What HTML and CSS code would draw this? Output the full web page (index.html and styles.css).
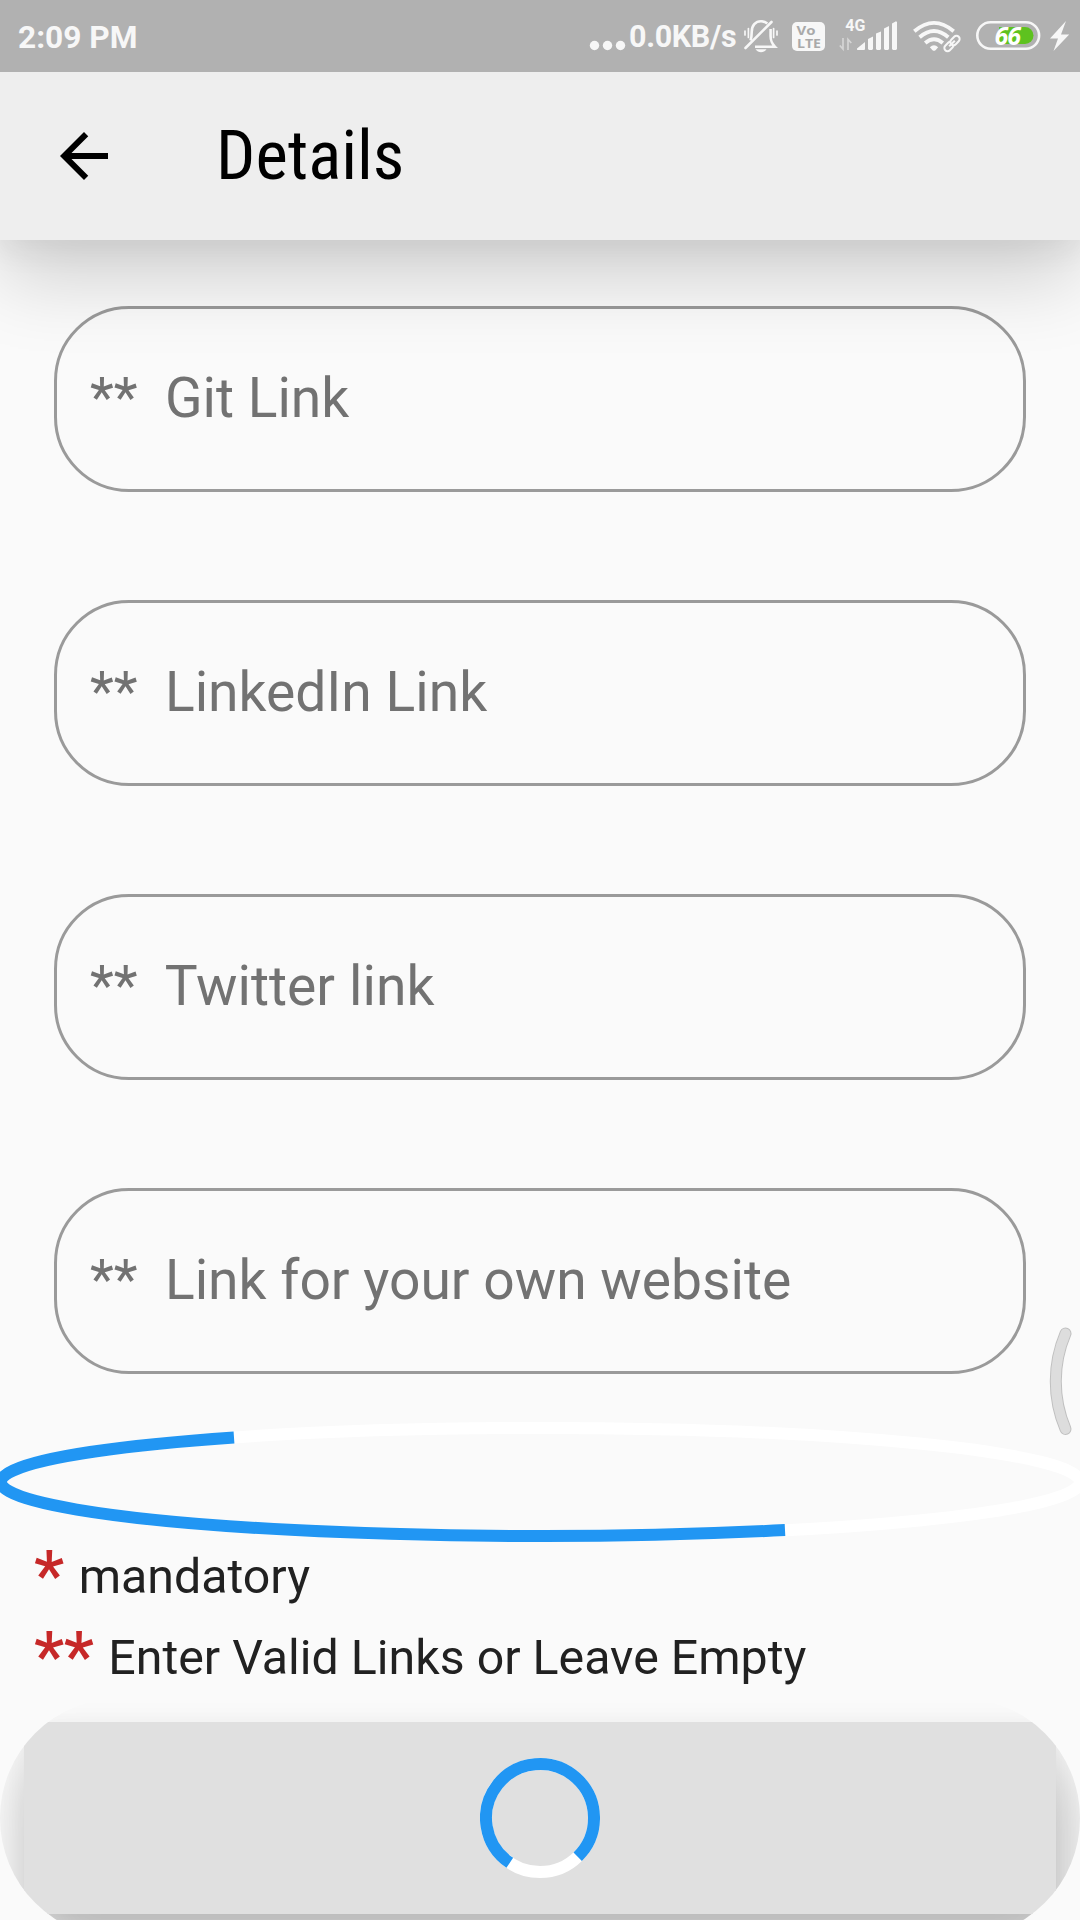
FILE: index.html
```html
<!DOCTYPE html>
<html lang="en">
<head>
<meta charset="utf-8">
<title>Details</title>
<link rel="stylesheet" href="styles.css">
</head>
<body>
<header class="top">
  <div class="status">
    <span class="time">2:09 PM</span>
    <div class="status-right">
      <svg class="dots" width="38" height="72" viewBox="588 0 38 72"><circle cx="594.5" cy="45.5" r="4.7"/><circle cx="607.5" cy="45.5" r="4.7"/><circle cx="620.5" cy="45.5" r="4.7"/></svg>
      <span class="speed">0.0KB/s</span>
      <svg width="40" height="72" viewBox="742 0 40 72">
        <g fill="none" stroke="#f7f7f7">
          <path stroke-width="2.6" d="M750.5 40.500C751.500 38 751.700 36 751.700 32C751.700 25.500 755.500 21.300 761 21.300C763.500 21.300 765.600 22 767.300 23.400M770.600 29V36C770.600 41 771.500 43 775 46.800H755"/>
          <path stroke-width="2.600" d="M771.500 22L745.500 48" stroke-linecap="round"/>
          <path stroke-width="1.700" stroke-linecap="round" d="M745 31V35M748.400 28.500V37.500M773.600 28.500V37.500M777 31V35"/>
        </g>
        <path fill="#f7f7f7" d="M755.500 49.200H766.500C765 51.300 763.200 52.200 761 52.200S757 51.300 755.500 49.200Z"/>
      </svg>
      <svg width="56" height="72" viewBox="782 0 56 72">
        <rect x="792" y="22" width="33" height="29" rx="5" fill="#f7f7f7"/>
        <g class="volte"><text x="796.500" y="35" textLength="19" lengthAdjust="spacingAndGlyphs">Vo</text><text x="797" y="47.500" textLength="24" lengthAdjust="spacingAndGlyphs">LTE</text></g>
      </svg>
      <svg width="64" height="72" viewBox="838 0 64 72">
        <text class="net" x="845.300" y="31.300">4G</text>
        <path fill="none" stroke="#d5d5d5" stroke-width="1.700" d="M843 38V49L839.800 45.500M848 50V39.500L851.300 43"/>
        <path fill="#f7f7f7" d="M857 48.500L865 42V49Q865 50 864 50H858Q856.500 50 857 48.500ZM868 39L873 36.500V49L872 50H869L868 49ZM876 33.500L881 31.500V49L880 50H877L876 49ZM884 28.500L889 26V49L888 50H885L884 49ZM892 23.500L896 21.200L897 22V49L896 50H893L892 49Z"/>
      </svg>
      <svg width="66" height="72" viewBox="902 0 66 72">
        <g fill="none" stroke="#f7f7f7" stroke-width="3.800">
          <path d="M914.300 31.300Q934 14.500 953.700 31.300"/><path d="M919.600 37.200Q934 24.800 948.300 37.200"/><path d="M925.200 43Q934 35.400 942.800 43"/>
        </g>
        <path fill="#f7f7f7" d="M929.800 47.200Q934 43.500 938.200 47.200L935.500 50.200Q934 51.500 932.500 50.200Z"/>
        <g fill="#b1b1b1" stroke="#f7f7f7" stroke-width="2" transform="rotate(-45 952 43.500)"><rect x="942.500" y="40.300" width="10.500" height="6.400" rx="3.200"/><rect x="951" y="40.300" width="10.500" height="6.400" rx="3.200"/><path d="M948 43.500H956"/></g>
      </svg>
      <svg width="76" height="72" viewBox="968 0 76 72">
        <rect x="977.300" y="22.300" width="61.800" height="26.400" rx="13.200" fill="none" stroke="#f7f7f7" stroke-width="2.600"/>
        <path fill="#5ec21f" d="M999 27H1025A8.500 8.500 0 0 1 1025 44H999Z"/>
        <text class="level" x="994.500" y="44.500">66</text>
      </svg>
      <svg width="36" height="72" viewBox="1044 0 36 72"><path fill="#f7f7f7" d="M1066 21L1050 38.500H1058L1053.500 51L1069.200 34.500H1061Z"/></svg>
    </div>
  </div>
  <div class="appbar">
    <svg width="72" height="72" viewBox="0 0 24 24"><path d="M20 11H7.830l5.590-5.590L12 4l-8 8 8 8 1.410-1.410L7.830 13H20v-2z"/></svg>
    <h1 class="title">Details</h1>
  </div>
</header>
<main class="form">
  <div class="field">**&nbsp; Git Link</div>
  <div class="field">**&nbsp; LinkedIn Link</div>
  <div class="field unkerned">**&nbsp; Twitter link</div>
  <div class="field">**&nbsp; Link for your own website</div>
</main>
<svg class="wide-loader" width="1080" height="100" viewBox="0 1428 1080 100">
  <ellipse cx="540" cy="1482" rx="540" ry="54" stroke="#fff"/>
  <path d="M234 1437.500A540 54 0 0 0 785 1530.100" stroke="#2196f3"/>
</svg>
<section class="notes">
  <p class="note"><b class="star">*</b><span>mandatory</span></p>
  <p class="note"><b class="star">**</b><span>Enter Valid Links or Leave Empty</span></p>
</section>
<div class="submit-clip">
  <div class="submit">
    <svg width="120" height="120" viewBox="-60 -60 120 120" fill="none" stroke-width="12">
      <circle r="54" stroke="#fff"/><path d="M-30.200 44.800A54 54 0 1 1 37.700 38.700" stroke="#2196f3"/>
    </svg>
  </div>
</div>
<svg class="edge-handle" width="30" height="112" viewBox="1046 1325 30 112" fill="none" stroke-linecap="round">
  <path d="M1065.500 1333.500A122 122 0 0 0 1065.500 1429" stroke="#c0c0c0" stroke-width="12"/>
  <path d="M1065.500 1333.500A122 122 0 0 0 1065.500 1429" stroke="#ddd" stroke-width="10"/>
</svg>
</body>
</html>
```
FILE: styles.css
```css
* { box-sizing: border-box; margin: 0; padding: 0; }
body {
  width: 1080px; height: 1920px; overflow: hidden; position: relative;
  display: flex; flex-direction: column;
  background: #fafafa; font-family: Roboto, sans-serif;
}
svg { display: block; flex: none; }
.top {
  position: relative; z-index: 1; flex: none;
  box-shadow: 0 40px 72px rgba(0,0,0,.16), 0 6px 30px 4px rgba(0,0,0,.06);
}
.status {
  height: 72px; background: #b1b1b1; color: #f7f7f7;
  display: flex; justify-content: space-between; align-items: center;
  padding-left: 18px; font-weight: 700; white-space: nowrap;
}
.time { font-size: 31.7px; padding-top: 2px; }
.status-right { display: flex; align-items: center; }
.dots { fill: #f7f7f7; }
.speed { width: 116px; padding: 1px 0 0 3px; font-size: 30.5px; letter-spacing: -.35px; }
.volte { font: 700 12.5px/1 "Open Sans", sans-serif; fill: #a9a9a9; }
.net { font: 700 16px Roboto, sans-serif; fill: #f7f7f7; }
.level { font: italic 700 25px "Open Sans", sans-serif; fill: #fff; letter-spacing: -1px; }
.appbar {
  height: 168px; background: #eee; display: flex; align-items: center;
  gap: 96px; padding-left: 48px;
}
.title { font-size: 69px; line-height: 82px; font-weight: 400; font-stretch: 75%; font-family: "Roboto Condensed", Roboto, sans-serif; }
.form { display: flex; flex-direction: column; gap: 108px; padding: 66px 54px 54px; flex: none; }
.field {
  height: 186px; border: 3px solid #9a9a9a; border-radius: 75px;
  padding-left: 33px; line-height: 178px; font-size: 55.2px; color: #727272;
  white-space: pre;
}
.unkerned { word-spacing: .4px; }
.wide-loader { overflow: visible; fill: none; stroke-width: 12; }
.notes { height: 170px; flex: none; padding: 1px 0 0 34px; }
.note { display: flex; align-items: flex-start; gap: 15px; height: 81px; line-height: 96px; font-size: 48.3px; color: #212121; white-space: nowrap; }
.star { font-size: 68px; line-height: 94px; font-weight: 500; letter-spacing: -.5px; color: #c62828; }
.submit-clip { height: 240px; flex: none; padding: 24px; border-radius: 120px; overflow: hidden; }
.submit {
  height: 192px; background: #e0e0e0; display: flex; align-items: center; justify-content: center;
  box-shadow: 8px 50px 60px 4px rgba(0,0,0,.22), 0 6px 26px rgba(0,0,0,.06);
}
.edge-handle { position: absolute; left: 1046px; top: 1325px; }
```
